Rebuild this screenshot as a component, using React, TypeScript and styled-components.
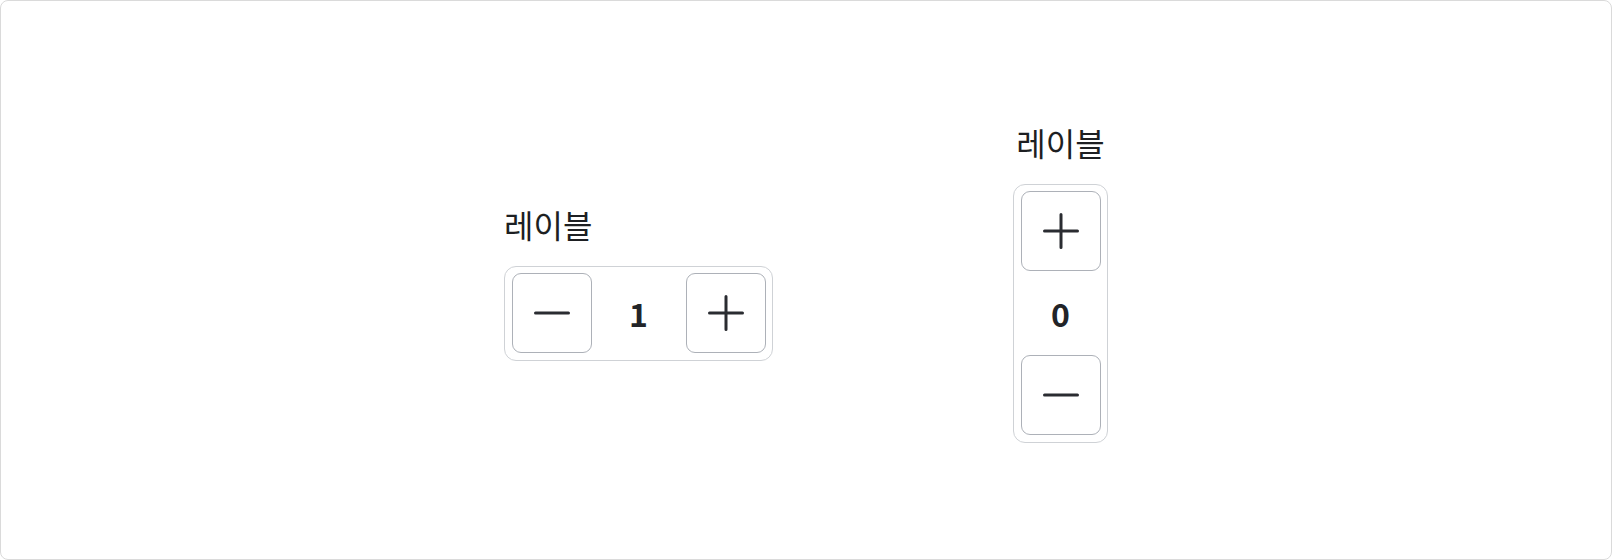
import styled, { createGlobalStyle } from "styled-components";

type Direction = "horizontal" | "vertical";

const GlobalStyle = createGlobalStyle`
	html, body {
		margin: 0;
		padding: 0;
		background: #ffffff;
	}
	body {
		font-family: "Noto Sans CJK KR", sans-serif;
		color: #222428;
	}
`;

const MinusIcon = () => (
	<svg width="40" height="40" viewBox="0 0 40 40" fill="none">
		<path d="M3.5 20h33" stroke="#2a2c31" strokeWidth="3" strokeLinecap="round" />
	</svg>
);

const PlusIcon = () => (
	<svg width="40" height="40" viewBox="0 0 40 40" fill="none">
		<path d="M3.5 20h33M20 3.5v33" stroke="#2a2c31" strokeWidth="3" strokeLinecap="round" />
	</svg>
);

type StepperProps = {
	label: string;
	value: number;
	direction: Direction;
};

const Stepper = ({ label, value, direction }: StepperProps) => {
	const minus = (
		<Styled.Button aria-label="decrease">
			<MinusIcon />
		</Styled.Button>
	);
	const plus = (
		<Styled.Button aria-label="increase">
			<PlusIcon />
		</Styled.Button>
	);

	return (
		<Styled.Field $direction={direction}>
			<StyledText.Label>{label}</StyledText.Label>
			<Styled.Control $direction={direction}>
				{direction === "horizontal" ? minus : plus}
				<StyledText.Value $direction={direction}>{value}</StyledText.Value>
				{direction === "horizontal" ? plus : minus}
			</Styled.Control>
		</Styled.Field>
	);
};

const App = () => {
	return (
		<>
			<GlobalStyle />
			<Styled.Frame>
				<Stepper label="레이블" value={1} direction="horizontal" />
				<Stepper label="레이블" value={0} direction="vertical" />
			</Styled.Frame>
		</>
	);
};

export default App;

const Styled = {
	Frame: styled.main`
		box-sizing: border-box;
		height: 560px;
		border: 1px solid #dadada;
		border-radius: 8px;
		display: flex;
		align-items: center;
		justify-content: center;
		gap: 240px;
		padding-top: 4px;
	`,
	Field: styled.div<{ $direction: Direction }>`
		display: flex;
		flex-direction: column;
		align-items: ${({ $direction }) => ($direction === "vertical" ? "center" : "flex-start")};
		gap: 22px;
	`,
	Control: styled.div<{ $direction: Direction }>`
		box-sizing: border-box;
		display: flex;
		flex-direction: ${({ $direction }) => ($direction === "vertical" ? "column" : "row")};
		align-items: center;
		padding: 6.5px;
		border: 1.5px solid #cfd2d6;
		border-radius: 12px;
		background: #ffffff;
	`,
	Button: styled.button`
		box-sizing: border-box;
		width: 80px;
		height: 80px;
		padding: 0;
		display: flex;
		align-items: center;
		justify-content: center;
		border: 1.5px solid #adb1b8;
		border-radius: 9px;
		background: #ffffff;
		cursor: pointer;
	`,
};

const StyledText = {
	Label: styled.span`
		font-size: 32px;
		line-height: 40px;
		color: #1d1f22;
	`,
	Value: styled.span<{ $direction: Direction }>`
		display: flex;
		align-items: center;
		justify-content: center;
		width: ${({ $direction }) => ($direction === "vertical" ? "80px" : "94px")};
		height: ${({ $direction }) => ($direction === "vertical" ? "84px" : "80px")};
		font-size: 32px;
		font-weight: 700;
		color: #222428;
	`,
};
